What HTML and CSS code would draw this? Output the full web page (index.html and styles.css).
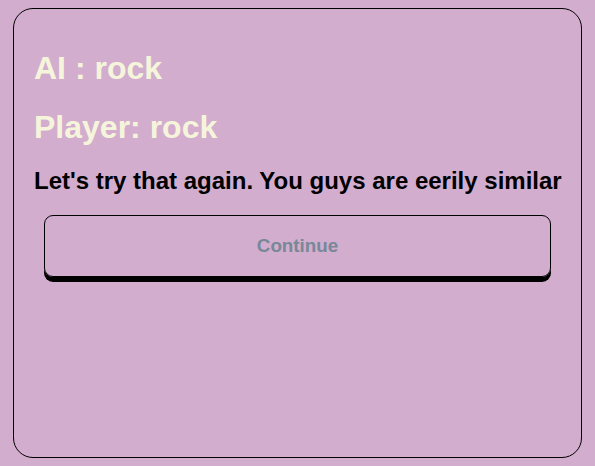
FILE: index.html
```html
<!DOCTYPE html>
<html>
<head>
<meta charset="utf-8">
<link rel="stylesheet" href="styles.css">
</head>
<body>
<div class="card">
  <h1 class="line">AI : rock</h1>
  <h1 class="line">Player: rock</h1>
  <h2 class="message">Let's try that again. You guys are eerily similar</h2>
  <button class="continue">Continue</button>
</div>
</body>
</html>
```
FILE: styles.css
```css
html, body {
  background: #d3adce;
}
body {
  margin: 8px;
  font-family: "Liberation Sans", Arial, sans-serif;
}
.card {
  margin: 0 5px;
  height: 408px;
  padding: 20px;
  border: 1px solid #000;
  border-radius: 20px;
}
.line {
  font-size: 32px;
  font-weight: bold;
  color: #f5f5dc;
  margin: 21.44px 0;
}
.message {
  font-size: 24px;
  font-weight: bold;
  color: #000;
  margin: 19.92px 0;
  white-space: nowrap;
}
.continue {
  display: block;
  width: calc(100% - 20px);
  margin: 0 10px;
  height: 62px;
  background: transparent;
  border: 1px solid #000;
  border-radius: 9px;
  box-shadow: 0 5px 0 #000;
  font-family: "Liberation Sans", Arial, sans-serif;
  font-size: 18.8px;
  font-weight: bold;
  color: #778899;
}
```
